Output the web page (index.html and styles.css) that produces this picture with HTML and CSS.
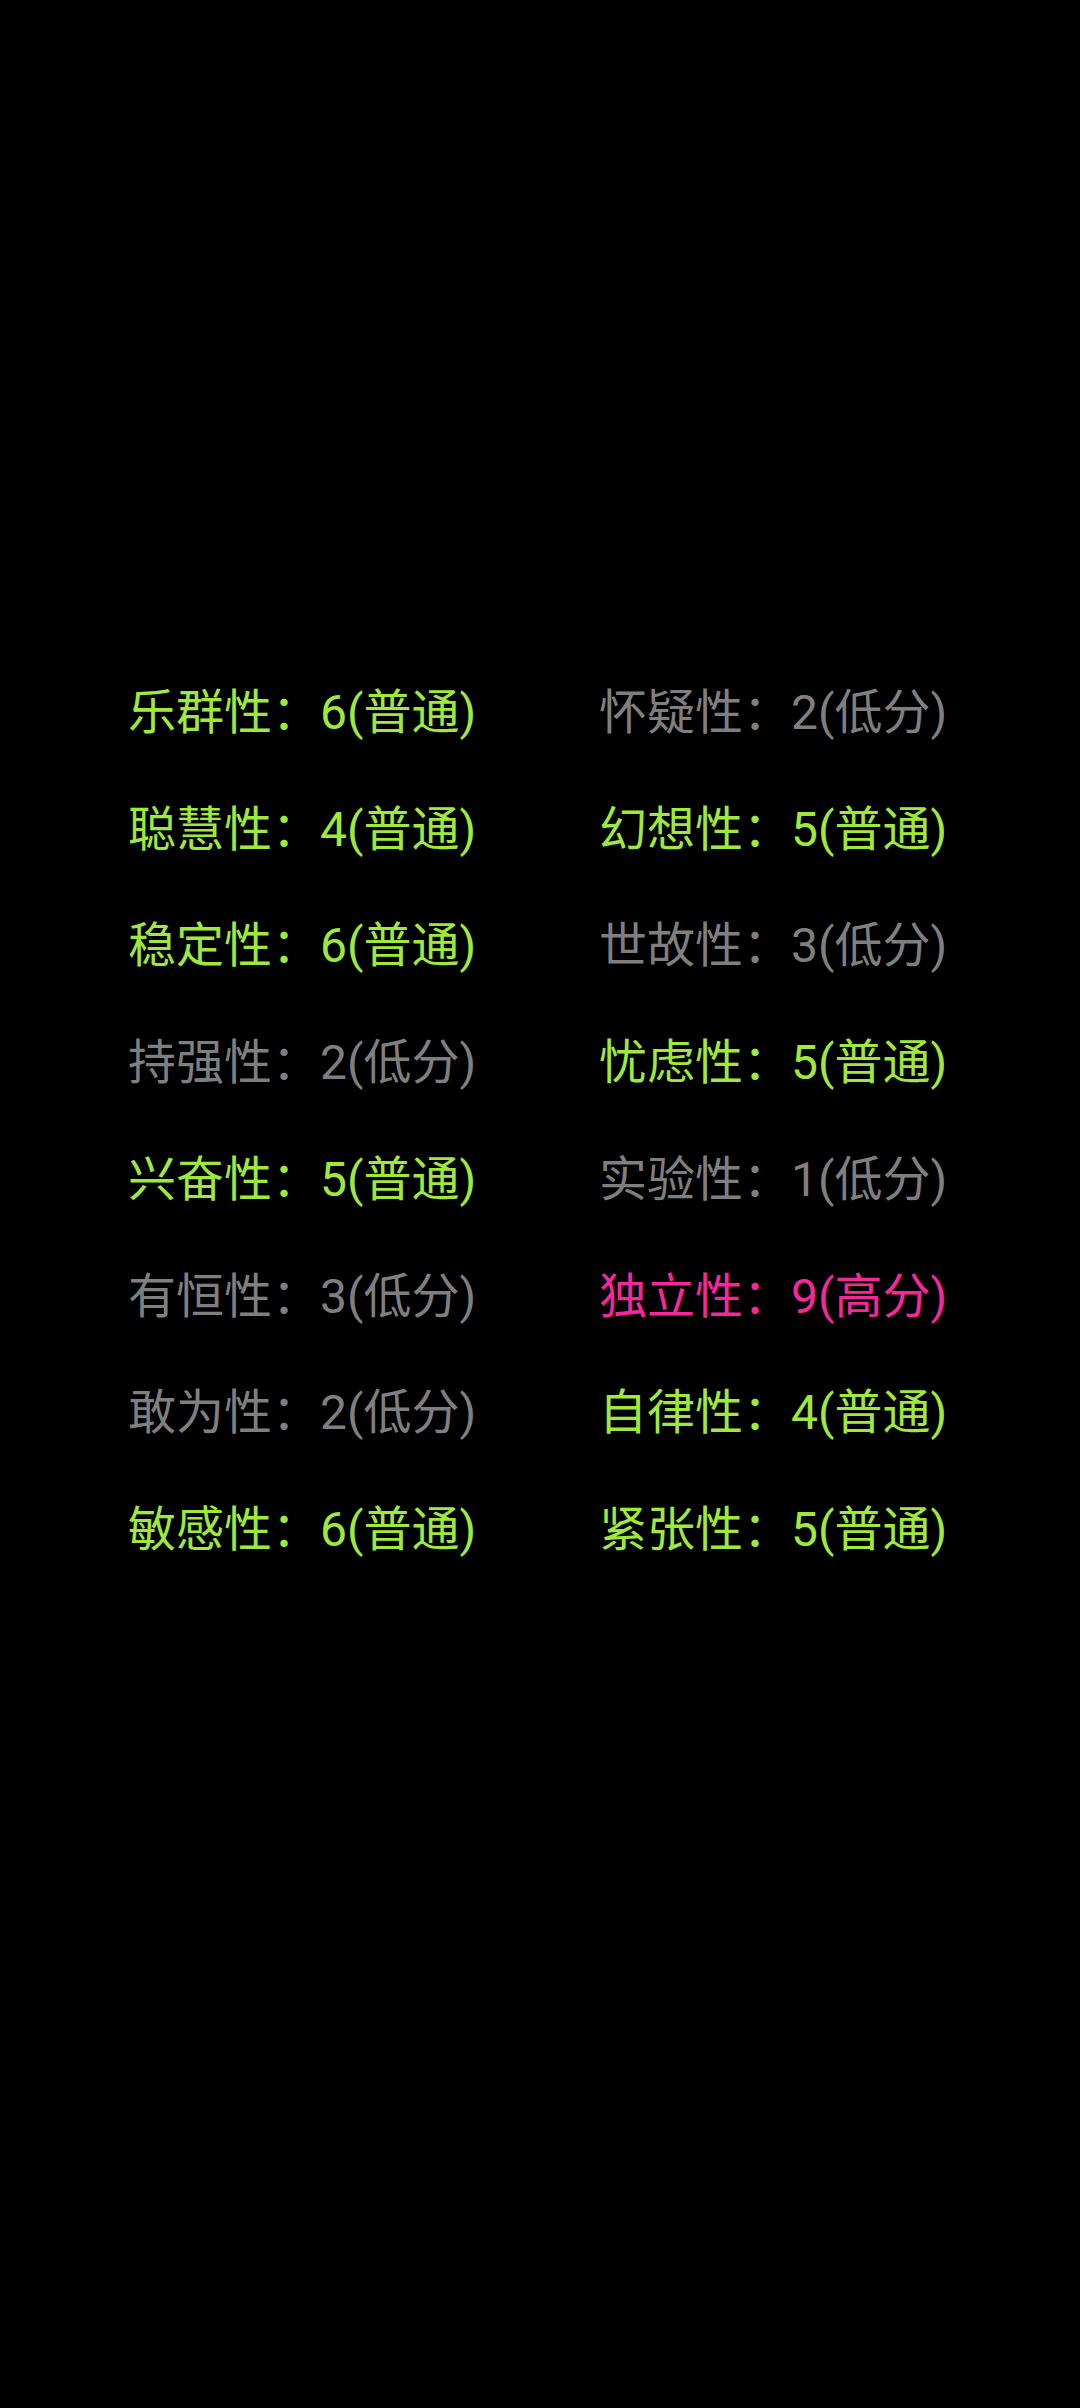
FILE: index.html
```html
<!DOCTYPE html>
<html lang="zh-CN">
<head>
  <meta charset="UTF-8" />
  <title>16PF</title>
  <meta name="viewport" content="width=device-width, initial-scale=1.0" />
  <link rel="stylesheet" href="styles.css">
</head>
<body>
  <div class="result">
    <div class="item mid">乐群性：6(普通)</div>
    <div class="item low">怀疑性：2(低分)</div>
    <div class="item mid">聪慧性：4(普通)</div>
    <div class="item mid">幻想性：5(普通)</div>
    <div class="item mid">稳定性：6(普通)</div>
    <div class="item low">世故性：3(低分)</div>
    <div class="item low">持强性：2(低分)</div>
    <div class="item mid">忧虑性：5(普通)</div>
    <div class="item mid">兴奋性：5(普通)</div>
    <div class="item low">实验性：1(低分)</div>
    <div class="item low">有恒性：3(低分)</div>
    <div class="item high">独立性：9(高分)</div>
    <div class="item low">敢为性：2(低分)</div>
    <div class="item mid">自律性：4(普通)</div>
    <div class="item mid">敏感性：6(普通)</div>
    <div class="item mid">紧张性：5(普通)</div>
  </div>
</body>
</html>
```

FILE: styles.css
```css
body {
  margin: 0;
  padding: 0;
  background: #000;
  font-family: Roboto, 'Noto Sans CJK SC', sans-serif;
  min-height: 2408px;
}

.result {
  display: grid;
  grid-template-columns: 471px 470px;
  padding: 655px 0 0 128px;
}

.item {
  font-size: 48px;
  line-height: 116.7px;
  white-space: nowrap;
}

.mid {
  color: #9fe83c;
}

.low {
  color: #7f7f7f;
}

.high {
  color: #f5289b;
}
```
